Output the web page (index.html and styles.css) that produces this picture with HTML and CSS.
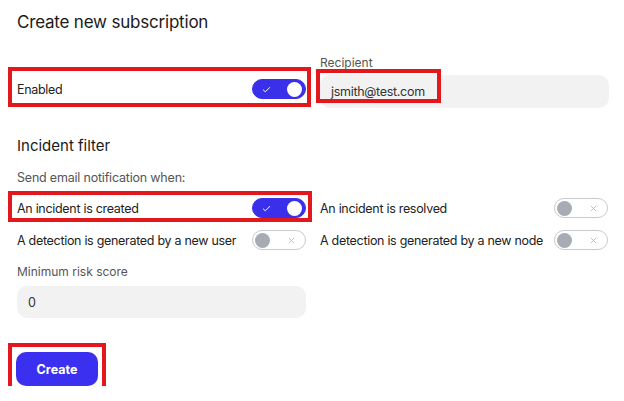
FILE: index.html
```html
<!DOCTYPE html>
<html lang="en">
  <head>
    <meta charset="UTF-8" />
    <meta name="viewport" content="width=device-width, initial-scale=1.0" />
    <title>Create new subscription</title>
    <link rel="stylesheet" href="styles.css">
  </head>
  <body>
    <main class="form">
      <h1>Create new subscription</h1>

      <div class="grid top">
        <div class="row row-enabled">
          <span class="row-label">Enabled</span>
          <span class="toggle on">
            <svg class="icon" viewBox="0 0 10 8" width="9" height="7"><path d="M1 4.2 3.6 6.6 9 1.4" fill="none" stroke="#fff" stroke-width="1.1"/></svg>
            <span class="knob"></span>
          </span>
          <span class="mark mark-enabled"></span>
        </div>
        <div class="field">
          <label class="field-label">Recipient</label>
          <div class="input">jsmith@test.com<span class="mark mark-recipient"></span></div>
        </div>
      </div>

      <h2>Incident filter</h2>
      <p class="hint">Send email notification when:</p>

      <div class="grid rules">
        <div class="row">
          <span class="row-label">An incident is created</span>
          <span class="toggle on">
            <svg class="icon" viewBox="0 0 10 8" width="9" height="7"><path d="M1 4.2 3.6 6.6 9 1.4" fill="none" stroke="#fff" stroke-width="1.1"/></svg>
            <span class="knob"></span>
          </span>
          <span class="mark mark-rule"></span>
        </div>
        <div class="row">
          <span class="row-label">An incident is resolved</span>
          <span class="toggle">
            <span class="knob"></span>
            <svg class="icon" viewBox="0 0 8 8" width="7" height="7"><path d="M1 1 7 7M7 1 1 7" fill="none" stroke="#b9b9be" stroke-width="1"/></svg>
          </span>
        </div>
        <div class="row">
          <span class="row-label">A detection is generated by a new user</span>
          <span class="toggle">
            <span class="knob"></span>
            <svg class="icon" viewBox="0 0 8 8" width="7" height="7"><path d="M1 1 7 7M7 1 1 7" fill="none" stroke="#b9b9be" stroke-width="1"/></svg>
          </span>
        </div>
        <div class="row">
          <span class="row-label">A detection is generated by a new node</span>
          <span class="toggle">
            <span class="knob"></span>
            <svg class="icon" viewBox="0 0 8 8" width="7" height="7"><path d="M1 1 7 7M7 1 1 7" fill="none" stroke="#b9b9be" stroke-width="1"/></svg>
          </span>
        </div>
      </div>

      <div class="field score">
        <label class="field-label">Minimum risk score</label>
        <div class="input">0</div>
      </div>

      <div class="actions">
        <button class="btn-primary">Create<span class="mark mark-button"></span></button>
      </div>
    </main>
  </body>
</html>
```

FILE: styles.css
```css
* {
  box-sizing: border-box;
  margin: 0;
  padding: 0;
}

body {
  font-family: Inter, "Noto Sans", sans-serif;
  color: #333;
  background-color: #fff;
}

.form {
  padding: 10px 15px 0 17px;
}

h1 {
  font-size: 17px;
  font-weight: 400;
  letter-spacing: -0.2px;
  line-height: 24px;
  color: #1a1a1a;
}

h2 {
  font-size: 15px;
  font-weight: 400;
  line-height: 22px;
  margin-top: 27px;
  color: #1a1a1a;
}

.grid {
  display: grid;
  grid-template-columns: 289px 289px;
  column-gap: 14px;
}

.top {
  margin-top: 21px;
}

.row {
  position: relative;
  display: flex;
  align-items: center;
  justify-content: space-between;
  height: 28px;
}

.row-label {
  font-size: 12.5px;
  font-weight: 400;
  letter-spacing: -0.3px;
  color: #222;
}

.row-enabled {
  height: 32px;
  align-self: end;
  margin-bottom: 5px;
  padding-top: 4px;
}

.field-label {
  display: block;
  font-size: 12px;
  line-height: 16px;
  color: #555;
}

.input {
  position: relative;
  margin-top: 4px;
  height: 33px;
  padding: 0 11px;
  display: flex;
  align-items: center;
  background-color: #f2f2f2;
  border-radius: 10px;
  font-size: 12.5px;
  letter-spacing: -0.3px;
  color: #333;
}

.hint {
  margin-top: 12px;
  font-size: 12.5px;
  letter-spacing: -0.2px;
  line-height: 18px;
  color: #555;
}

.rules {
  margin-top: 7px;
  row-gap: 4px;
}

.rules .row:nth-child(2),
.rules .row:nth-child(4) {
  padding-right: 1px;
}

.toggle {
  position: relative;
  display: flex;
  align-items: center;
  justify-content: space-between;
  width: 54px;
  height: 20px;
  padding: 0 3px 0 9px;
  border-radius: 10px;
  border: 1px solid #c9c9ce;
  background-color: #fff;
}

.toggle .knob {
  width: 15px;
  height: 15px;
  border-radius: 50%;
  background-color: #a8aab4;
}

.toggle:not(.on) {
  padding: 0 10px 0 2px;
}

.toggle.on {
  background-color: #3b30ea;
  border-color: #3b30ea;
}

.toggle.on .knob {
  background-color: #fff;
}

.icon {
  display: block;
}

.score {
  width: 289px;
  margin-top: 10px;
}

.score .input {
  margin-top: 6px;
  height: 32px;
}

.actions {
  margin-top: 34px;
  margin-left: -1px;
}

.btn-primary {
  position: relative;
  width: 82px;
  height: 34px;
  border: none;
  border-radius: 10px;
  background-color: #3b30f0;
  color: #fff;
  font-family: inherit;
  font-size: 12.5px;
  font-weight: 700;
}

/* red annotation boxes */
.mark {
  position: absolute;
  border: 4px solid #e3181c;
  pointer-events: none;
}

.mark-enabled {
  top: -4px;
  bottom: -4px;
  left: -9px;
  right: -5px;
}

.mark-recipient {
  top: -6px;
  left: -4px;
  width: 125px;
  height: 34px;
}

.mark-rule {
  top: -3px;
  bottom: 0;
  left: -9px;
  right: -6px;
}

.mark-button {
  top: -9px;
  bottom: -5px;
  left: -8px;
  right: -8px;
}
```
